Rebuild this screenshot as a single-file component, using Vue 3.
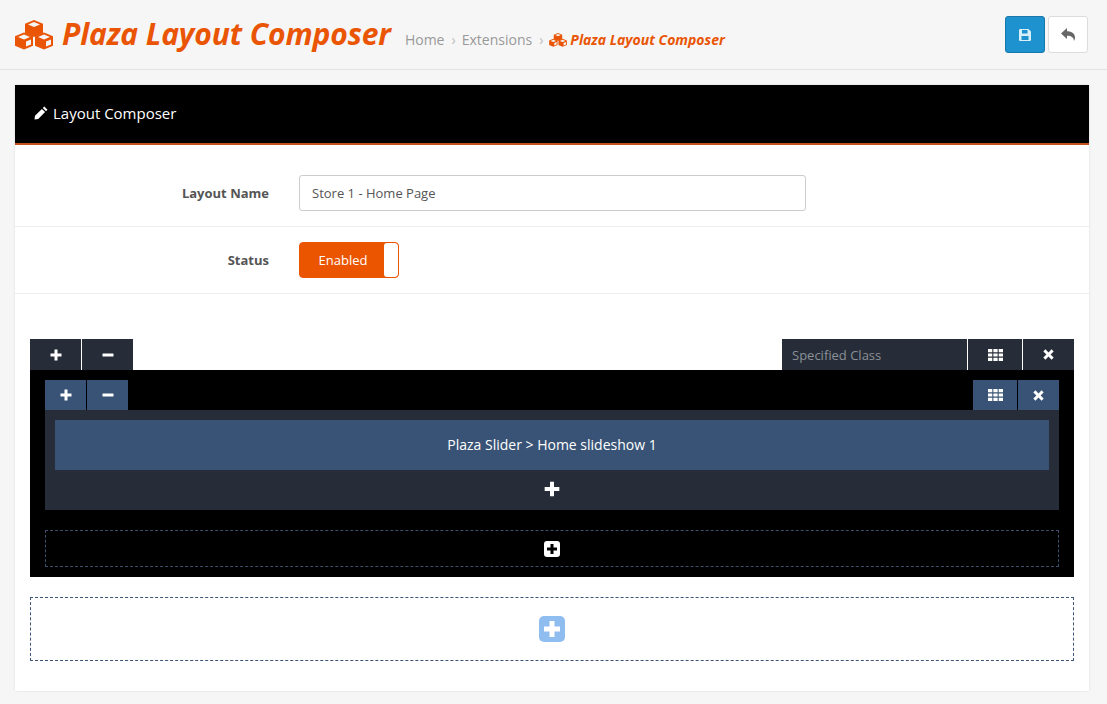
<template>
  <div class="page">
    <svg class="defs" width="0" height="0">
      <symbol id="cubes" viewBox="0 0 38 30">
        <path d="M19 0l9 3.800v9.400l-9 3.900-9-3.900V3.800z" />
        <path fill="#f6f6f6" d="M19 2l6 2.500-6 2.500-6-2.500z" />
        <path d="M9 12.500l9 3.800v9.400l-9 3.900-9-3.900v-9.400z" />
        <path fill="#f6f6f6" d="M9 14.500l6 2.500-6 2.500-6-2.500zM11 21.500l5-2.100v5l-5 2.200z" />
        <path d="M29 12.500l9 3.800v9.400l-9 3.900-9-3.900v-9.400z" />
        <path fill="#f6f6f6" d="M29 14.500l6 2.500-6 2.500-6-2.500zM31 21.500l5-2.100v5l-5 2.200z" />
      </symbol>
      <symbol id="plus" viewBox="0 0 12 12">
        <path d="M4.500 0.500h3v4h4v3h-4v4h-3v-4h-4v-3h4z" />
      </symbol>
      <symbol id="minus" viewBox="0 0 12 12">
        <rect x="0.500" y="4.500" width="11" height="3" rx="0.500" />
      </symbol>
      <symbol id="th" viewBox="0 0 14 11">
        <path d="M0 0h4v3H0zM5 0h4v3H5zM10 0h4v3h-4zM0 4h4v3H0zM5 4h4v3H5zM10 4h4v3h-4zM0 8h4v3H0zM5 8h4v3H5zM10 8h4v3h-4z" />
      </symbol>
      <symbol id="times" viewBox="0 0 10 10">
        <path d="M2.200 0.300L5 3.100 7.800 0.300 9.700 2.200 6.900 5l2.800 2.800-1.900 1.900L5 6.900 2.200 9.700 0.300 7.800 3.100 5 0.300 2.200z" />
      </symbol>
    </svg>

    <header class="page-header">
      <svg class="title-icon"><use href="#cubes" /></svg>
      <h1>Plaza Layout Composer</h1>
      <ul class="breadcrumb">
        <li>Home</li>
        <li class="sep">›</li>
        <li>Extensions</li>
        <li class="sep">›</li>
        <li class="current">
          <svg class="crumb-icon"><use href="#cubes" /></svg>
          Plaza Layout Composer
        </li>
      </ul>
      <div class="header-btns">
        <button class="btn btn-save" title="Save">
          <svg viewBox="0 0 12 12" width="12" height="12">
            <path fill="#d6effa" fill-rule="evenodd" d="M1 0h8.500L12 2.500V11a1 1 0 0 1-1 1H1a1 1 0 0 1-1-1V1a1 1 0 0 1 1-1zM3 1v3.500h5.500V1zM2.500 7v4h7V7z" />
          </svg>
        </button>
        <button class="btn btn-back" title="Back">
          <svg viewBox="0 0 14 13" width="14" height="13">
            <path fill="#666" d="M6 0v3.200c4.800 0 8 2.300 8 6.300 0 1.400-.5 2.600-1.100 3.500.2-3.300-2.300-5.300-6.900-5.300V11L0 5.500z" />
          </svg>
        </button>
      </div>
    </header>

    <section class="panel">
      <div class="panel-heading">
        <svg viewBox="0 0 14 14" width="14" height="14">
          <path fill="#fff" d="M10.300 0.500l3.200 3.200-1.500 1.500-3.200-3.200zM7.900 2.900l3.200 3.200-6.900 6.900L0.500 13.500l.5-3.700z" />
        </svg>
        Layout Composer
      </div>

      <div class="form-row name-row">
        <label>Layout Name</label>
        <input class="text-input" type="text" value="Store 1 - Home Page" />
      </div>
      <div class="form-row status-row">
        <label>Status</label>
        <div class="toggle">
          <span class="toggle-label">Enabled</span>
          <span class="toggle-knob"></span>
        </div>
      </div>

      <div class="composer">
        <div class="toolbar outer">
          <button class="tool"><svg class="ic"><use href="#plus" /></svg></button>
          <button class="tool"><svg class="ic"><use href="#minus" /></svg></button>
          <input class="class-input" type="text" placeholder="Specified Class" />
          <button class="tool th-btn"><svg class="ic-th"><use href="#th" /></svg></button>
          <button class="tool"><svg class="ic-x"><use href="#times" /></svg></button>
        </div>

        <div class="row-box">
          <div class="toolbar inner">
            <button class="tool"><svg class="ic"><use href="#plus" /></svg></button>
            <button class="tool"><svg class="ic"><use href="#minus" /></svg></button>
            <span class="spacer"></span>
            <button class="tool th-btn"><svg class="ic-th"><use href="#th" /></svg></button>
            <button class="tool"><svg class="ic-x"><use href="#times" /></svg></button>
          </div>
          <div class="col-box">
            <div class="module">Plaza Slider &gt; Home slideshow 1</div>
            <div class="add-module"><svg class="ic-add"><use href="#plus" /></svg></div>
          </div>
          <div class="add-col">
            <svg viewBox="0 0 16 16" width="16" height="16">
              <rect width="16" height="16" rx="3" fill="#fff" />
              <path d="M6.500 3h3v3.500H13v3H9.500V13h-3V9.500H3v-3h3.500z" fill="#000" />
            </svg>
          </div>
        </div>

        <div class="add-row">
          <svg viewBox="0 0 26 26" width="26" height="26">
            <rect width="26" height="26" rx="5" fill="#8fbdf0" />
            <path d="M10.500 5h5v5.500H21v5h-5.500V21h-5v-5.500H5v-5h5.500z" fill="#fff" />
          </svg>
        </div>
      </div>
    </section>
  </div>
</template>

<script setup>
</script>

<style>
html, body {
  background: #f6f6f6;
}
</style>

<style scoped>
.page {
  font-family: "Open Sans", sans-serif;
  font-size: 13px;
  color: #4d4d4d;
  height: 704px;
  overflow: hidden;
}

.defs {
  position: absolute;
}

.page-header {
  display: flex;
  align-items: center;
  height: 69px;
  padding: 0 19px 0 15px;
  border-bottom: 1px solid #e3e3e3;
}

.title-icon {
  width: 38px;
  height: 30px;
  fill: #e95504;
  margin-right: 9px;
}

h1 {
  margin: -1px 14px 0 0;
  font-size: 30px;
  font-weight: 700;
  font-style: italic;
  color: #e95504;
  letter-spacing: -0.1px;
  line-height: 40px;
}

.breadcrumb {
  display: flex;
  align-items: center;
  list-style: none;
  margin: 10px 0 0;
  padding: 0;
  font-size: 14px;
  color: #999;
}

.sep {
  margin: 0 6px 0 7px;
  color: #bbb;
}

.current {
  display: flex;
  align-items: center;
  font-weight: 700;
  font-style: italic;
  color: #e95504;
}

.crumb-icon {
  width: 18px;
  height: 14px;
  fill: #e95504;
  margin-right: 3px;
}

.header-btns {
  display: flex;
  gap: 3px;
  margin-left: auto;
}

.btn {
  display: flex;
  align-items: center;
  justify-content: center;
  width: 40px;
  height: 37px;
  padding: 0;
  border-radius: 3px;
  cursor: pointer;
}

.btn-save {
  background: #1e91cf;
  border: 1px solid #1978ab;
}

.btn-back {
  background: #fff;
  border: 1px solid #ddd;
}

.panel {
  margin: 15px 18px 0 15px;
  height: 606px;
  background: #fff;
  box-shadow: 0 0 2px rgba(0, 0, 0, 0.12);
}

.panel-heading {
  display: flex;
  align-items: center;
  gap: 5px;
  height: 56px;
  padding: 0 19px 2px;
  background: #000;
  border-bottom: 2px solid #c5511a;
  color: #fff;
  font-size: 15px;
}

.form-row {
  display: flex;
  align-items: center;
  box-sizing: border-box;
  border-bottom: 1px solid #ededed;
}

.name-row {
  height: 82px;
  padding: 30px 0 15px;
}

.status-row {
  height: 67px;
}

.form-row label {
  width: 254px;
  margin-right: 30px;
  text-align: right;
  font-weight: 700;
  color: #555;
}

.text-input {
  width: 507px;
  height: 36px;
  box-sizing: border-box;
  padding: 0 12px;
  border: 1px solid #ccc;
  border-radius: 3px;
  font: 13px "Open Sans", sans-serif;
  color: #555;
  outline: none;
}

.toggle {
  display: flex;
  justify-content: space-between;
  width: 100px;
  height: 36px;
  box-sizing: border-box;
  background: #ec5500;
  border: 1px solid #ec5500;
  border-radius: 4px;
  overflow: hidden;
}

.toggle-label {
  width: 84px;
  box-sizing: border-box;
  padding-left: 2px;
  line-height: 34px;
  text-align: center;
  color: #fff;
}

.toggle-knob {
  width: 14px;
  background: #fff;
  border-radius: 3px;
}

.composer {
  padding: 45px 15px 0;
}

.toolbar {
  display: flex;
}

.toolbar.outer {
  height: 31px;
  gap: 1px;
}

.tool {
  display: flex;
  align-items: center;
  justify-content: center;
  padding: 0;
  border: 0;
  color: #fff;
  fill: #fff;
  cursor: pointer;
}

.outer .tool {
  width: 51px;
  background: #262d38;
}

.outer .th-btn {
  width: 54px;
}

.class-input {
  width: 185px;
  margin-left: auto;
  box-sizing: border-box;
  padding: 0 10px;
  background: #262d38;
  border: 0;
  outline: none;
  color: #fff;
  font: 13px "Open Sans", sans-serif;
}

.class-input::placeholder {
  color: #8b9097;
  opacity: 1;
}

.ic {
  width: 12px;
  height: 12px;
}

.ic-th {
  width: 15px;
  height: 12px;
}

.ic-x {
  width: 11px;
  height: 11px;
}

.row-box {
  background: #000;
  padding: 10px 15px;
  height: 207px;
  box-sizing: border-box;
}

.toolbar.inner {
  height: 30px;
  gap: 1px;
}

.inner .tool {
  width: 41px;
  background: #385375;
}

.inner .th-btn {
  width: 44px;
}

.spacer {
  flex: 1;
}

.col-box {
  height: 100px;
  box-sizing: border-box;
  padding: 10px 10px 0;
  background: #262d38;
}

.module {
  height: 50px;
  line-height: 50px;
  background: #385375;
  color: #fff;
  font-size: 14px;
  text-align: center;
}

.add-module {
  display: flex;
  justify-content: center;
  padding-top: 11px;
  fill: #fff;
}

.ic-add {
  width: 16px;
  height: 16px;
}

.add-col {
  display: flex;
  align-items: center;
  justify-content: center;
  height: 37px;
  margin-top: 20px;
  box-sizing: border-box;
  border: 1px dashed #3d4f6b;
}

.add-row {
  display: flex;
  align-items: center;
  justify-content: center;
  height: 64px;
  margin-top: 20px;
  box-sizing: border-box;
  border: 1px dashed #3d5575;
}
</style>
